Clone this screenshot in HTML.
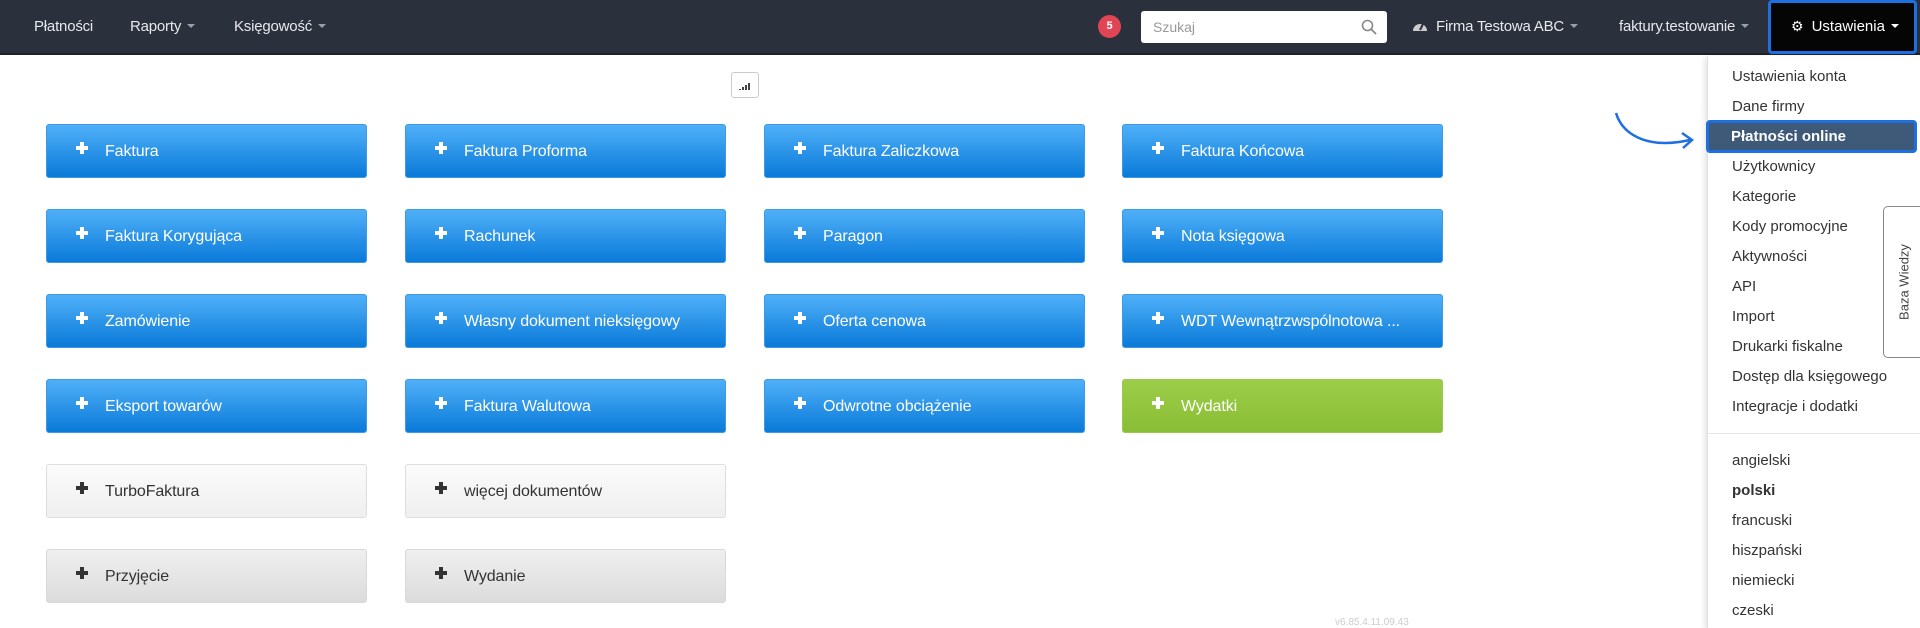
<!DOCTYPE html>
<html><head><meta charset="utf-8"><style>
*{margin:0;padding:0;box-sizing:border-box}
body{width:1920px;height:628px;overflow:hidden;background:#fff;font-family:"Liberation Sans",Arial,sans-serif;position:relative}
.nav{position:absolute;left:0;top:0;width:1920px;height:55px;background:#2a313c;border-bottom:2px solid #1d222a}
.nav .t{position:absolute;top:18px;color:#e6e8eb;font-size:15px;letter-spacing:-0.2px}
.car{display:inline-block;width:0;height:0;border-left:4px solid transparent;border-right:4px solid transparent;border-top:4px solid #9aa0a8;margin-left:6px;vertical-align:3px}
.badge{position:absolute;left:1098px;top:15px;width:23px;height:23px;border-radius:50%;background:#e04556;color:#fff;font-size:11px;font-weight:bold;text-align:center;line-height:23px}
.search{position:absolute;left:1141px;top:11px;width:246px;height:32px;background:#fff;border-radius:3px;color:#999;font-size:14px;padding:8px 12px}
.ust{position:absolute;left:1768px;top:0;width:149px;height:54px;background:#050505;border:3px solid #1e6fe0;border-radius:4px;color:#fff;font-size:15px;padding:15px 0 0 20px}
.btn{position:absolute;width:321px;height:54px;border-radius:3px;color:#fff;font-size:16px;padding:18px 0 0 58px;background:linear-gradient(#4fb0f8,#0a7ad9);border:1px solid #3d9be6;letter-spacing:-0.1px}
.btn:before{content:"";position:absolute;left:29px;top:21px;width:12px;height:4px;background:currentColor}
.btn:after{content:"";position:absolute;left:33px;top:17px;width:4px;height:12px;background:currentColor}
.g{background:linear-gradient(#9ccd48,#8abd36);border-color:#9ac94c}
.w{background:linear-gradient(#fbfbfb,#efefef);border-color:#dedede;color:#333}
.w2{background:linear-gradient(#efefef,#dcdcdc);border-color:#d8d8d8;color:#333}
.dd{position:absolute;left:1707px;top:56px;width:213px;height:572px;background:#fff;border-left:1px solid #e0e0e0;box-shadow:-2px 2px 6px rgba(0,0,0,.12)}
.dd div{position:absolute;left:24px;font-size:15px;color:#333}
.hl{position:absolute;left:1706px;top:120px;width:211px;height:33px;background:#3f5a78;border:3px solid #1e6fe0;border-radius:4px;color:#fff;font-size:15px;font-weight:bold;padding:5px 0 0 22px}
.baza{position:absolute;left:1883px;top:206px;width:40px;height:152px;border:1px solid #888;border-right:none;border-radius:5px 0 0 5px;background:#fff}
.baza span{position:absolute;left:50%;top:50%;transform:translate(-50%,-50%) rotate(-90deg);white-space:nowrap;font-size:13px;color:#444}
</style></head><body>
<div class="nav">
<span class="t" style="left:34px">Płatności</span>
<span class="t" style="left:130px">Raporty<i class="car"></i></span>
<span class="t" style="left:234px">Księgowość<i class="car"></i></span>
<div class="badge">5</div>
<div class="search">Szukaj
<svg style="position:absolute;right:10px;top:8px" width="16" height="16" viewBox="0 0 16 16"><circle cx="6.5" cy="6.5" r="5" fill="none" stroke="#888" stroke-width="1.6"/><path d="M10 10l5 5" stroke="#888" stroke-width="1.8"/></svg></div>
<span class="t" style="left:1412px"><svg width="16" height="14" viewBox="0 0 16 14" style="vertical-align:-2px;margin-right:8px"><path d="M1 12A7 7 0 0 1 15 12Z" fill="#ccc"/><path d="M8 11L11 5" stroke="#2a313c" stroke-width="2"/></svg>Firma Testowa ABC<i class="car"></i></span>
<span class="t" style="left:1619px">faktury.testowanie<i class="car"></i></span>
</div>
<div class="ust"><span style="font-size:14px;margin-right:8px">⚙</span>Ustawienia<i class="car" style="border-top-color:#fff"></i></div>
<div style="position:absolute;left:731px;top:72px;width:28px;height:26px;border:1px solid #ccc;border-radius:3px">
<svg width="26" height="24" viewBox="0 0 26 24"><path d="M8 17v-1M11 17v-3M14 17v-5M17 17v-7" stroke="#444" stroke-width="2"/></svg></div>

<div class="btn" style="left:46px;top:124px">Faktura</div>
<div class="btn" style="left:405px;top:124px">Faktura Proforma</div>
<div class="btn" style="left:764px;top:124px">Faktura Zaliczkowa</div>
<div class="btn" style="left:1122px;top:124px">Faktura Końcowa</div>
<div class="btn" style="left:46px;top:209px">Faktura Korygująca</div>
<div class="btn" style="left:405px;top:209px">Rachunek</div>
<div class="btn" style="left:764px;top:209px">Paragon</div>
<div class="btn" style="left:1122px;top:209px">Nota księgowa</div>
<div class="btn" style="left:46px;top:294px">Zamówienie</div>
<div class="btn" style="left:405px;top:294px">Własny dokument nieksięgowy</div>
<div class="btn" style="left:764px;top:294px">Oferta cenowa</div>
<div class="btn" style="left:1122px;top:294px">WDT Wewnątrzwspólnotowa ...</div>
<div class="btn" style="left:46px;top:379px">Eksport towarów</div>
<div class="btn" style="left:405px;top:379px">Faktura Walutowa</div>
<div class="btn" style="left:764px;top:379px">Odwrotne obciążenie</div>
<div class="btn g" style="left:1122px;top:379px">Wydatki</div>
<div class="btn w" style="left:46px;top:464px">TurboFaktura</div>
<div class="btn w" style="left:405px;top:464px">więcej dokumentów</div>
<div class="btn w2" style="left:46px;top:549px">Przyjęcie</div>
<div class="btn w2" style="left:405px;top:549px">Wydanie</div>
<div style="position:absolute;left:1335px;top:617px;font-size:10px;color:#ccc">v6.85.4.11.09.43</div>

<svg style="position:absolute;left:1610px;top:108px" width="100" height="50" viewBox="0 0 100 50"><path d="M6 5C12 25 35 42 80 32" fill="none" stroke="#1e6fe0" stroke-width="2.5"/><path d="M72 25L82 32L73 40" fill="none" stroke="#1e6fe0" stroke-width="2.5"/></svg>

<div class="dd">
<div style="top:12px">Ustawienia konta</div>
<div style="top:42px">Dane firmy</div>
<div style="top:102px">Użytkownicy</div>
<div style="top:132px">Kategorie</div>
<div style="top:162px">Kody promocyjne</div>
<div style="top:192px">Aktywności</div>
<div style="top:222px">API</div>
<div style="top:252px">Import</div>
<div style="top:282px">Drukarki fiskalne</div>
<div style="top:312px">Dostęp dla księgowego</div>
<div style="top:342px">Integracje i dodatki</div>
<div style="top:377px;left:0;width:213px;height:1px;background:#e5e5e5"></div>
<div style="top:396px">angielski</div>
<div style="top:426px;font-weight:bold">polski</div>
<div style="top:456px">francuski</div>
<div style="top:486px">hiszpański</div>
<div style="top:516px">niemiecki</div>
<div style="top:546px">czeski</div>
</div>
<div class="hl">Płatności online</div>
<div class="baza"><span>Baza Wiedzy</span></div>
</body></html>
